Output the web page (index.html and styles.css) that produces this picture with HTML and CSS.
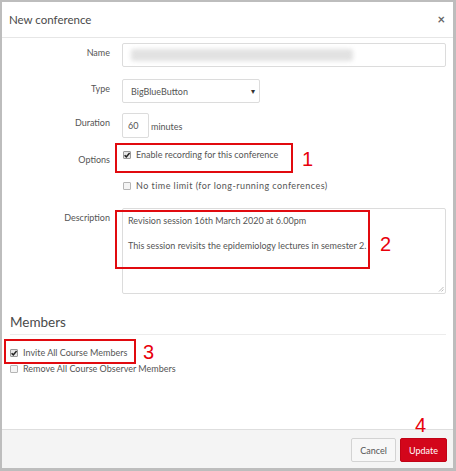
FILE: index.html
```html
<!DOCTYPE html>
<html lang="en">
<head>
<meta charset="utf-8">
<title>New conference</title>
<link rel="stylesheet" href="styles.css">
</head>
<body>
<div class="dialog">
  <div class="header">
    <span class="title">New conference</span>
    <span class="close">&#215;</span>
  </div>
  <div class="body">
    <div class="row row-name">
      <div class="label">Name</div>
      <div class="control">
        <div class="input input-name"><span class="blur"></span></div>
      </div>
    </div>
    <div class="row row-type">
      <div class="label">Type</div>
      <div class="control">
        <div class="input select"><span>BigBlueButton</span><span class="caret">&#9662;</span></div>
      </div>
    </div>
    <div class="row row-duration">
      <div class="label">Duration</div>
      <div class="control inline">
        <div class="input input-small">60</div>
        <span class="unit">minutes</span>
      </div>
    </div>
    <div class="row row-options">
      <div class="label label-options">Options</div>
      <div class="control stack">
        <div class="check check-first"><span class="box checked"><svg viewBox="0 0 8 8" width="8" height="8"><path d="M1.6 4.2 L3.3 5.9 L6.6 2.1" fill="none" stroke="#222" stroke-width="1.5"/></svg></span><span>Enable recording for this conference</span></div>
        <div class="check check-second"><span class="box"></span><span class="wide">No time limit (for long-running conferences)</span></div>
      </div>
    </div>
    <div class="row row-desc">
      <div class="label">Description</div>
      <div class="control">
        <div class="textarea">
          <div>Revision session 16th March 2020 at 6.00pm</div>
          <div>&nbsp;</div>
          <div>This session revisits the epidemiology lectures in semester 2.</div>
          <svg class="grip" viewBox="0 0 6 6" width="6" height="6"><path d="M5.5 1 L1 5.5 M5.5 3.5 L3.5 5.5" stroke="#aaa" stroke-width="0.8"/></svg>
        </div>
      </div>
    </div>
    <h2 class="members">Members</h2>
    <div class="member-list">
      <div class="check"><span class="box checked"><svg viewBox="0 0 8 8" width="8" height="8"><path d="M1.6 4.2 L3.3 5.9 L6.6 2.1" fill="none" stroke="#222" stroke-width="1.5"/></svg></span><span>Invite All Course Members</span></div>
      <div class="check"><span class="box"></span><span>Remove All Course Observer Members</span></div>
    </div>
  </div>
  <div class="footer">
    <button class="btn btn-cancel">Cancel</button>
    <button class="btn btn-update">Update</button>
  </div>

  <div class="mark mark-1"></div>
  <div class="num num-1">1</div>
  <div class="mark mark-2"></div>
  <div class="num num-2">2</div>
  <div class="mark mark-3"></div>
  <div class="num num-3">3</div>
  <div class="num num-4">4</div>
</div>
</body>
</html>
```
FILE: styles.css
```css
html, body {
  margin: 0;
  padding: 0;
}
body {
  width: 456px;
  height: 471px;
  box-sizing: border-box;
  background: #bdbdbd;
  padding: 2px 3px 3px 2px;
  font-family: Lato, "Open Sans", "Liberation Sans", sans-serif;
  color: #555;
  font-size: 9px;
}
.dialog {
  position: relative;
  background: #fff;
  height: 466px;
  display: flex;
  flex-direction: column;
}
.header {
  height: 35px;
  flex: none;
  border-bottom: 1px solid #e6e6e6;
  display: flex;
  align-items: center;
  justify-content: space-between;
  padding: 0 8px 0 7px;
}
.title {
  font-size: 11.5px;
  color: #4a4a4a;
}
.close {
  font-size: 13px;
  font-weight: bold;
  color: #666;
  line-height: 1;
}
.body {
  flex: 1;
  padding: 5px 7px 0 0;
}
.row {
  display: grid;
  grid-template-columns: 108px 1fr;
  column-gap: 12px;
  align-items: start;
}
.label {
  text-align: right;
  line-height: 14px;
  padding-top: 3px;
  color: #555;
}
.input {
  box-sizing: border-box;
  border: 1px solid #dcdcdc;
  border-radius: 2px;
  height: 24px;
  display: flex;
  align-items: center;
  padding: 0 7px;
  color: #555;
}
.input-name {
  position: relative;
}
.blur {
  display: block;
  width: 222px;
  height: 12px;
  margin-left: 1px;
  background: #e2e2e2;
  filter: blur(2px);
  border-radius: 3px;
}
.row-type { margin-top: 12px; }
.select {
  width: 138px;
  justify-content: space-between;
  padding: 0 4px 0 8px;
}
.caret {
  font-size: 8px;
  color: #333;
}
.row-duration { margin-top: 10px; }
.inline {
  display: flex;
  align-items: center;
  gap: 2px;
}
.input-small {
  width: 27px;
  height: 25px;
  padding: 0 5px;
}
.unit { padding-top: 1px; }
.row-options { margin-top: 10px; }
.label-options { padding-top: 5px; }
.stack {
  display: flex;
  flex-direction: column;
}
.check {
  display: flex;
  align-items: center;
  gap: 5px;
  line-height: 14px;
  color: #555;
}
.check-first { padding-left: 1px; }
.check-second { padding-left: 1px; margin-top: 17px; }
.wide { letter-spacing: 0.45px; }
.box {
  box-sizing: border-box;
  width: 8px;
  height: 8px;
  border: 1px solid #b5b5b5;
  border-radius: 1px;
  background: #f4f4f4;
  display: inline-flex;
  flex: none;
  position: relative;
}
.box.checked {
  background: #e6e6e6;
  border-color: #999;
}
.box svg {
  position: absolute;
  left: -1px;
  top: -1px;
}
.row-desc { margin-top: 15px; }
.textarea {
  position: relative;
  box-sizing: border-box;
  border: 1px solid #dcdcdc;
  border-radius: 2px;
  height: 86px;
  padding: 6px 5px;
  line-height: 12.3px;
  color: #555;
}
.grip {
  position: absolute;
  right: 1px;
  bottom: 1px;
}
.members {
  margin: 18px 0 0 8px;
  font-size: 13.5px;
  font-weight: normal;
  color: #4a4a4a;
  line-height: 20px;
  padding-bottom: 2px;
  border-bottom: 1px solid #ececec;
}
.member-list {
  padding: 11px 0 0 8px;
  display: flex;
  flex-direction: column;
  gap: 2px;
}
.footer {
  box-sizing: border-box;
  flex: none;
  height: 39px;
  border-top: 1px solid #dedede;
  background: #f4f4f4;
  display: flex;
  justify-content: flex-end;
  align-items: flex-start;
  gap: 4px;
  padding: 8px 6px 0 0;
}
.btn {
  font-family: Lato, "Open Sans", "Liberation Sans", sans-serif;
  font-size: 9px;
  height: 24px;
  border-radius: 2px;
  padding: 0;
  cursor: pointer;
}
.btn-cancel {
  width: 45px;
  background: #f7f7f7;
  border: 1px solid #d3d3d3;
  color: #555;
}
.btn-update {
  width: 47px;
  background: #d3061b;
  border: 1px solid #c10316;
  color: #fff;
}
.mark {
  position: absolute;
  box-sizing: border-box;
  border: 2px solid #e10a0f;
}
.mark-1 { left: 113px; top: 141px; width: 178px; height: 30px; }
.mark-2 { left: 113px; top: 208px; width: 255px; height: 59px; }
.mark-3 { left: 2px; top: 337px; width: 132px; height: 25px; }
.num {
  position: absolute;
  font-family: "Liberation Sans", Arial, sans-serif;
  font-size: 20px;
  line-height: 20px;
  color: #e8000b;
}
.num-1 { left: 300px; top: 147px; }
.num-2 { left: 378px; top: 232px; }
.num-3 { left: 141px; top: 340px; }
.num-4 { left: 413px; top: 413px; }
```
